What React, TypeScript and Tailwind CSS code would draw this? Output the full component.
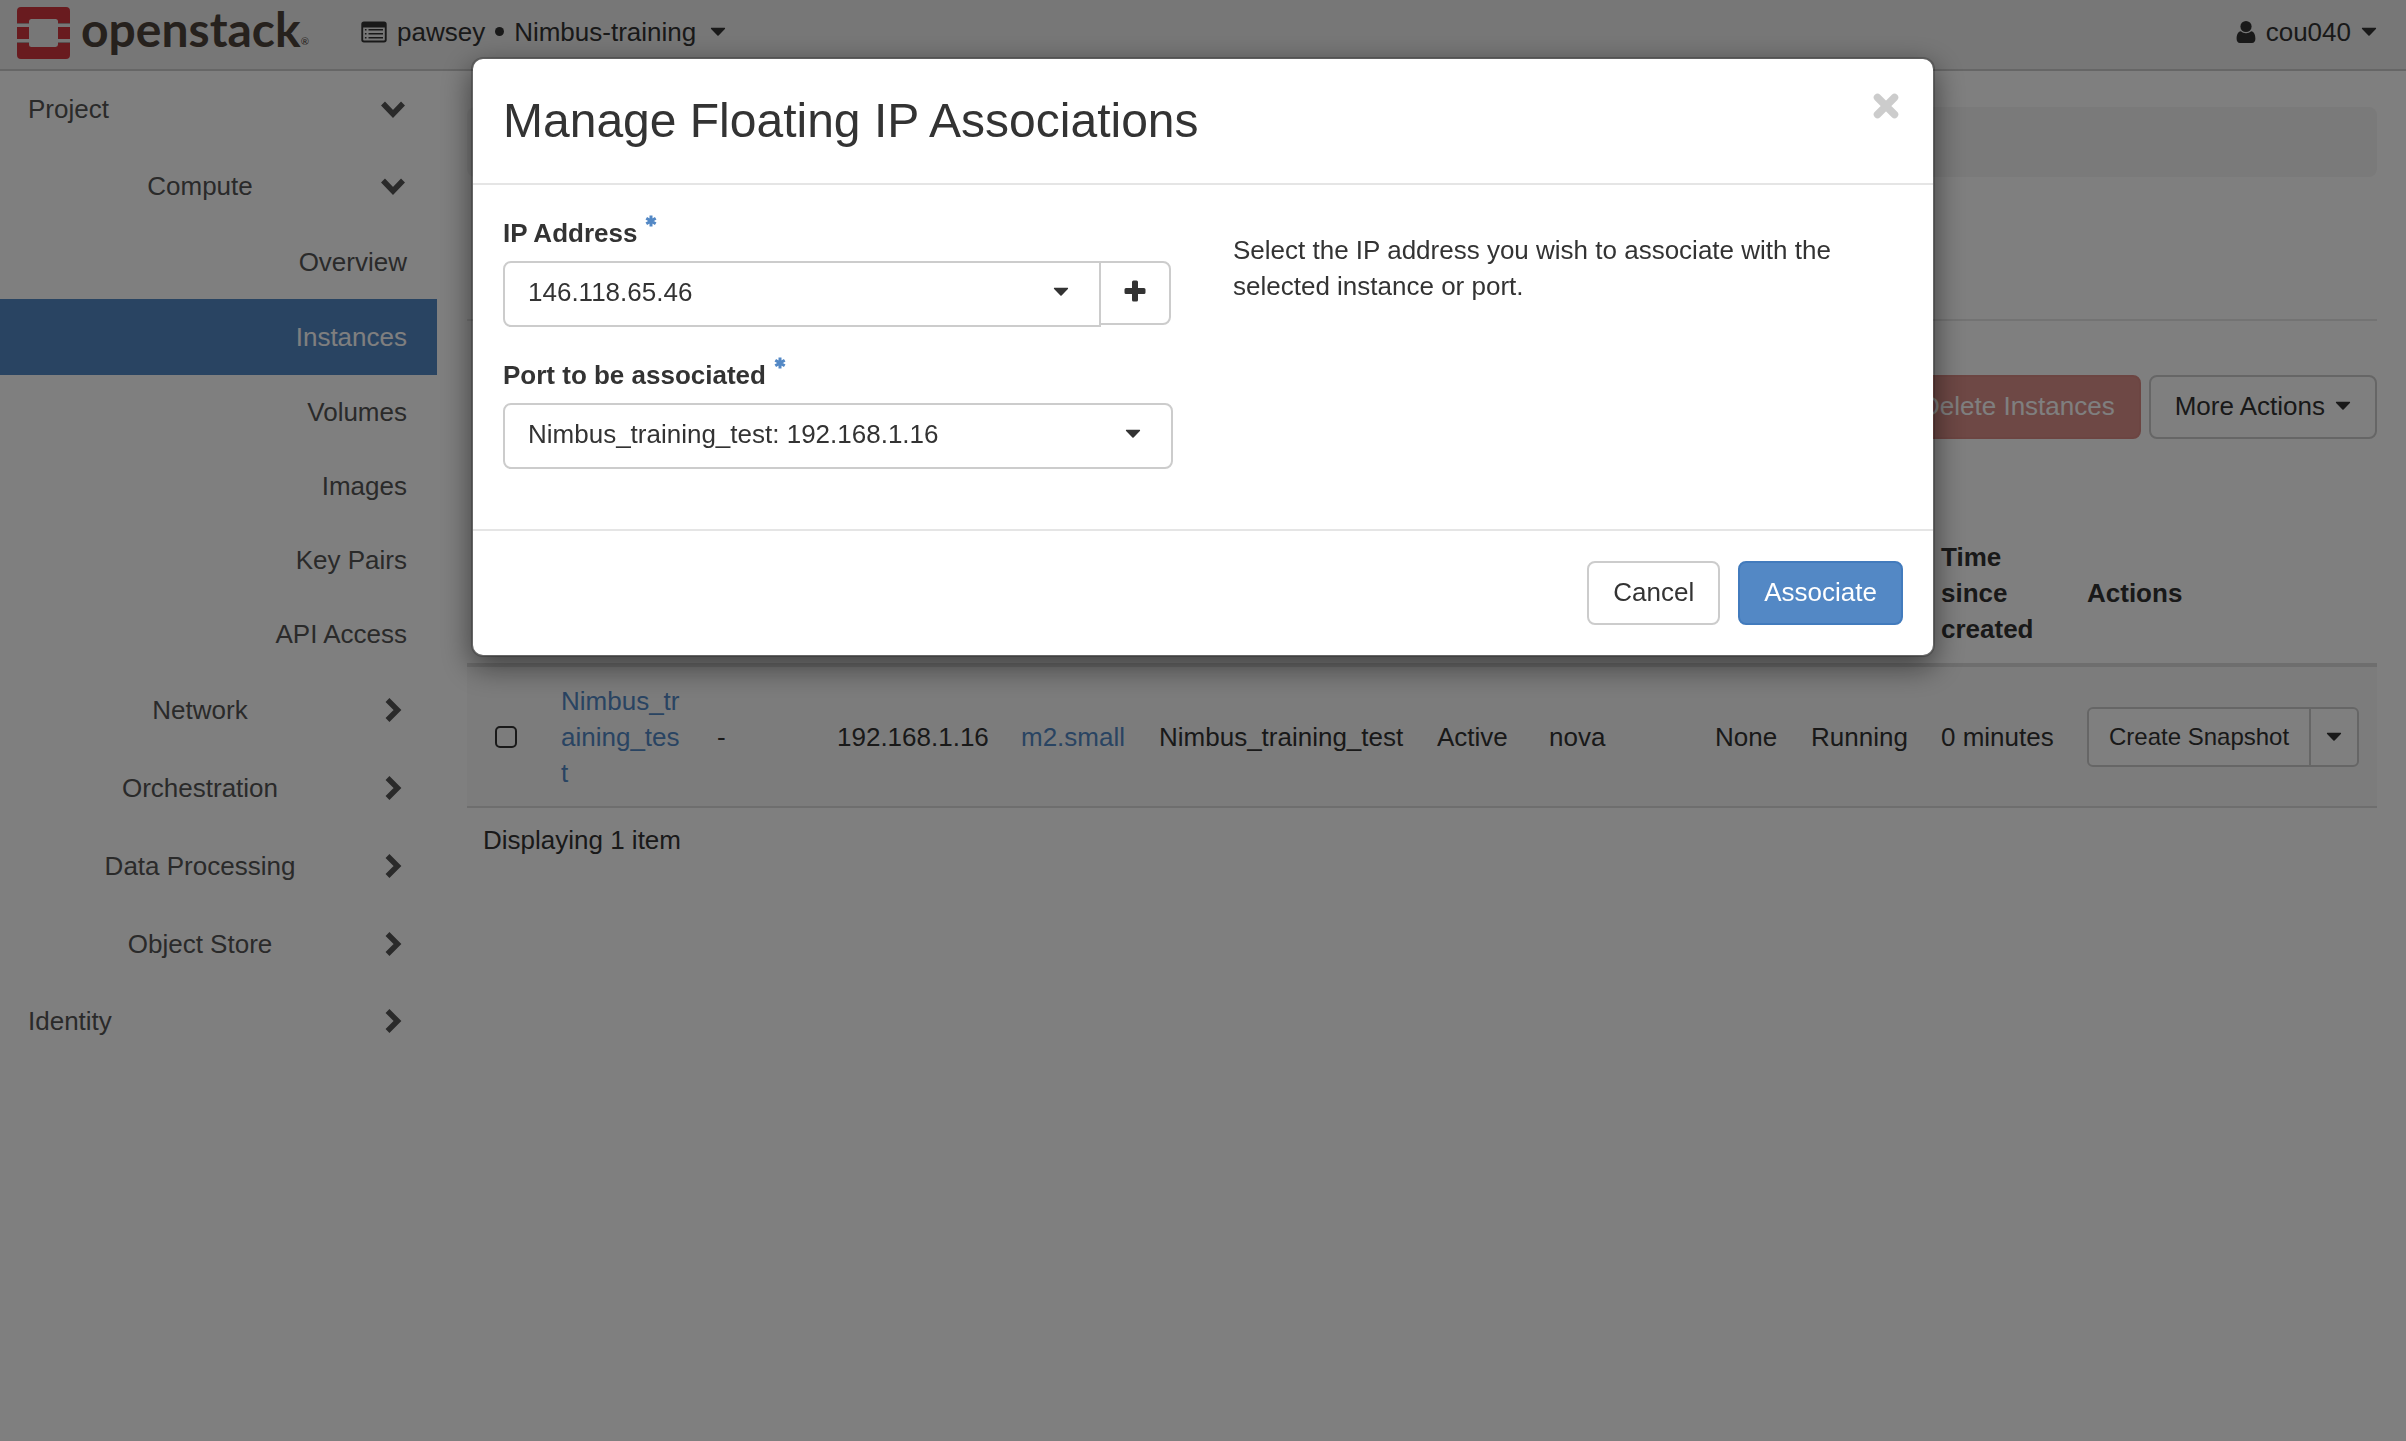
import React from 'react';

type IconProps = { className?: string };

function Caret({ className = '' }: IconProps) {
  return (
    <svg aria-hidden="true" viewBox="0 0 16 10" className={`h-[10px] w-4 shrink-0 fill-current ${className}`}>
      <path d="M1.6 .8h12.8c.7 0 1 .7.5 1.200L8.600 8.600a.9.9 0 0 1-1.200 0L1.100 2c-.5-.5-.2-1.200.5-1.200z" />
    </svg>
  );
}

function ChevronDown() {
  return (
    <svg aria-hidden="true" viewBox="0 0 26 26" className="size-[26px] shrink-0 fill-none stroke-current">
      <path d="M3 7.500l10 10.500 10-10.500" strokeWidth="5.500" />
    </svg>
  );
}

function ChevronRight() {
  return (
    <svg aria-hidden="true" viewBox="0 0 26 26" className="size-[26px] shrink-0 fill-none stroke-current">
      <path d="M7.500 3l10 10-10 10" strokeWidth="5.500" />
    </svg>
  );
}

function ListIcon() {
  return (
    <svg aria-hidden="true" viewBox="0 0 26 22" className="h-[22px] w-[26px] shrink-0 fill-current">
      <path
        fillRule="evenodd"
        d="M3 .5h20a2.700 2.700 0 0 1 2.700 2.700v15.600a2.700 2.700 0 0 1-2.700 2.700H3a2.700 2.700 0 0 1-2.700-2.700V3.200A2.700 2.700 0 0 1 3 .5zM2.200 6.500v12c0 .6.400 1 1 1h19.600c.6 0 1-.4 1-1v-12z"
      />
      <path d="M3.900 8h1.600v1.500H3.900zM3.900 12h1.600v1.500H3.900zM3.900 16h1.600v1.500H3.900zM7.500 8h14.500v1.600H7.500zM7.500 12h14.500v1.600H7.500zM7.500 16h14.500v1.600H7.500z" />
    </svg>
  );
}

function UserIcon() {
  return (
    <svg aria-hidden="true" viewBox="0 0 20 24" className="h-6 w-5 shrink-0 fill-current">
      <circle cx="10" cy="6.500" r="5.600" />
      <path d="M4.800 11.200A7 7 0 0 0 10 13.300a7 7 0 0 0 5.200-2.100c2.900.3 4.200 3.600 4.200 7.600 0 2.600-1.200 4.200-3.400 4.200H4C1.800 23 .6 21.400.6 18.800c0-4 1.300-7.300 4.200-7.600z" />
    </svg>
  );
}

function PlusIcon() {
  return (
    <svg aria-hidden="true" viewBox="0 0 22 22" className="size-[22px] fill-current">
      <path d="M9.500.5h3A1.500 1.500 0 0 1 14 2v6h6a1.500 1.500 0 0 1 1.500 1.500v3A1.500 1.500 0 0 1 20 14h-6v6a1.500 1.500 0 0 1-1.500 1.500h-3A1.500 1.500 0 0 1 8 20v-6H2a1.500 1.500 0 0 1-1.500-1.500v-3A1.500 1.500 0 0 1 2 8h6V2A1.500 1.500 0 0 1 9.500.5z" />
    </svg>
  );
}

function CloseIcon() {
  return (
    <svg aria-hidden="true" viewBox="0 0 26 26" className="size-[26px] fill-none stroke-current">
      <path d="M4.500 4.500l17 17M21.500 4.500l-17 17" strokeWidth="7.500" strokeLinecap="round" />
    </svg>
  );
}

function Asterisk() {
  return (
    <svg aria-hidden="true" viewBox="0 0 12 12" className="size-3 fill-none stroke-[#5388c5]">
      <path d="M6 .5v11M1.300 3.200l9.400 5.600M10.700 3.200L1.300 8.800" strokeWidth="3" />
    </svg>
  );
}

function Logo() {
  return (
    <a href="#home" aria-label="openstack" className="flex items-center gap-[11px] text-[#4d433b]">
      <svg aria-hidden="true" viewBox="0 0 53 52" className="h-[52px] w-[53px] shrink-0">
        <path
          fill="#d2363e"
          d="M4 0h45a4 4 0 0 1 4 4v12H41v-1.500a2.500 2.500 0 0 0-2.500-2.500h-24a2.500 2.500 0 0 0-2.500 2.500V16H0V4a4 4 0 0 1 4-4zM0 20h12v12H0zM41 20h12v12H41zM0 36h12v1.500a2.500 2.500 0 0 0 2.500 2.500h24a2.500 2.500 0 0 0 2.500-2.500V36h12v12a4 4 0 0 1-4 4H4a4 4 0 0 1-4-4z"
        />
        <path fill="#b9a3a3" d="M0 16h12v1H0zM41 16h12v1H41zM0 35h12v1H0zM41 35h12v1H41z" />
      </svg>
      <span className="flex items-end pb-2 font-[Lato,sans-serif] text-[48px] leading-[52px] font-bold">
        openstack
        <span className="text-[10px] leading-7 font-normal">®</span>
      </span>
    </a>
  );
}

type Level = 'panel' | 'group' | 'item';
type NavEntry = { label: string; level: Level; open?: boolean; active?: boolean };

const NAV: NavEntry[] = [
  { label: 'Project', level: 'panel', open: true },
  { label: 'Compute', level: 'group', open: true },
  { label: 'Overview', level: 'item' },
  { label: 'Instances', level: 'item', active: true },
  { label: 'Volumes', level: 'item' },
  { label: 'Images', level: 'item' },
  { label: 'Key Pairs', level: 'item' },
  { label: 'API Access', level: 'item' },
  { label: 'Network', level: 'group' },
  { label: 'Orchestration', level: 'group' },
  { label: 'Data Processing', level: 'group' },
  { label: 'Object Store', level: 'group' },
  { label: 'Identity', level: 'panel' },
];

function Sidebar() {
  return (
    <nav aria-label="Dashboard" className="w-[437px] shrink-0 text-[#555]">
      <ul>
        {NAV.map((n) => (
          <li key={n.label}>
            {n.level === 'item' ? (
              <a
                href="#nav"
                aria-current={n.active ? 'page' : undefined}
                className={`flex items-center justify-end pr-[30px] ${
                  n.active ? 'h-[76px] bg-[#5388c5] text-white' : 'h-[74px]'
                }`}
              >
                {n.label}
              </a>
            ) : (
              <button
                type="button"
                aria-expanded={!!n.open}
                className={`flex w-full items-center gap-1 pr-[31px] ${
                  n.level === 'panel' ? 'h-[76px] pl-7' : 'h-[78px] pl-6'
                }`}
              >
                <span className={`flex-1 ${n.level === 'panel' ? 'text-left' : 'text-center'}`}>{n.label}</span>
                {n.open ? <ChevronDown /> : <ChevronRight />}
              </button>
            )}
          </li>
        ))}
      </ul>
    </nav>
  );
}

const HIDDEN_HEADERS = [
  'Instance Name',
  'Image Name',
  'IP Address',
  'Size',
  'Key Pair',
  'Status',
  'Availability Zone',
  'Task',
  'Power State',
];

function InstancesTable() {
  return (
    <table className="mt-[84px] w-full table-fixed border-collapse text-left">
      <colgroup>
        <col className="w-[78px]" />
        <col className="w-[156px]" />
        <col className="w-[120px]" />
        <col className="w-[184px]" />
        <col className="w-[138px]" />
        <col className="w-[278px]" />
        <col className="w-[112px]" />
        <col className="w-[166px]" />
        <col className="w-[96px]" />
        <col className="w-[130px]" />
        <col className="w-[146px]" />
        <col />
      </colgroup>
      <thead>
        <tr className="border-b-4 border-[#ddd]">
          <th scope="col" aria-label="Select" />
          {HIDDEN_HEADERS.map((h) => (
            <th key={h} scope="col" aria-label={h} />
          ))}
          <th scope="col" className="p-4 font-bold">Time since created</th>
          <th scope="col" className="p-4 font-bold">Actions</th>
        </tr>
      </thead>
      <tbody>
        <tr className="h-[142px] border-b-2 border-[#ddd] bg-[#f9f9f9]">
          <td className="pl-7">
            <input
              type="checkbox"
              aria-label="Select Nimbus_training_test"
              className="block size-[22px] appearance-none rounded-[5px] border-2 border-[#333]"
            />
          </td>
          <td className="px-4 break-all">
            <a href="#instance" className="text-[#5388c5]">Nimbus_training_test</a>
          </td>
          <td className="px-4">-</td>
          <td className="px-4">192.168.1.16</td>
          <td className="px-4 whitespace-nowrap">
            <a href="#flavor" className="text-[#5388c5]">m2.small</a>
          </td>
          <td className="px-4">Nimbus_training_test</td>
          <td className="px-4">Active</td>
          <td className="px-4">nova</td>
          <td className="px-4">None</td>
          <td className="px-4">Running</td>
          <td className="pl-4 whitespace-nowrap">0 minutes</td>
          <td className="pl-4">
            <div className="flex h-[60px] text-[24px]">
              <button type="button" className="rounded-l-[6px] border-2 border-[#ccc] bg-white px-5 whitespace-nowrap">
                Create Snapshot
              </button>
              <button
                type="button"
                aria-label="More instance actions"
                className="-ml-[2px] flex w-[50px] items-center justify-center rounded-r-[6px] border-2 border-[#ccc] bg-white"
              >
                <Caret />
              </button>
            </div>
          </td>
        </tr>
      </tbody>
      <tfoot>
        <tr>
          <td colSpan={12} className="px-4 py-[14px]">Displaying 1 item</td>
        </tr>
      </tfoot>
    </table>
  );
}

function SelectBox({ id, value, className = '' }: { id: string; value: string; className?: string }) {
  return (
    <div className="relative min-w-0 flex-1">
      <select
        id={id}
        defaultValue={value}
        className={`block h-[66px] w-full appearance-none border-2 border-[#ccc] bg-white pr-16 pb-1 pl-[23px] ${className}`}
      >
        <option>{value}</option>
      </select>
      <Caret className="pointer-events-none absolute top-[26px] right-8" />
    </div>
  );
}

function FieldLabel({ htmlFor, children }: { htmlFor: string; children: React.ReactNode }) {
  return (
    <label htmlFor={htmlFor} className="mb-[10px] flex items-start gap-2 font-bold">
      {children}
      <Asterisk />
    </label>
  );
}

function FloatingIpDialog() {
  return (
    <div className="fixed inset-0 flex items-start justify-center bg-black/50 pt-[57px]">
      <div
        role="dialog"
        aria-modal="true"
        aria-labelledby="dialog-title"
        className="w-full max-w-[1464px] rounded-[12px] border-2 border-black/20 bg-white bg-clip-padding shadow-[0_10px_30px_rgba(0,0,0,0.5)]"
      >
        <header className="flex items-start justify-between border-b-2 border-[#e5e5e5] px-[30px] pt-[30px] pb-[34px]">
          <h2 id="dialog-title" className="pt-1 text-[48px] leading-[56px]">Manage Floating IP Associations</h2>
          <button type="button" aria-label="Close" className="p-1 text-[#ccc]">
            <CloseIcon />
          </button>
        </header>
        <form>
          <div className="grid grid-cols-2 gap-[60px] px-[30px] pt-[30px] pb-[60px]">
            <div>
              <FieldLabel htmlFor="ip">IP Address</FieldLabel>
              <div className="mb-[30px] flex items-start pr-[2px]">
                <SelectBox id="ip" value="146.118.65.46" className="rounded-l-[8px]" />
                <button
                  type="button"
                  aria-label="Allocate IP"
                  className="-ml-[2px] flex h-16 w-[72px] items-center justify-center rounded-r-[8px] border-2 border-[#ccc] bg-white pb-1"
                >
                  <PlusIcon />
                </button>
              </div>
              <FieldLabel htmlFor="port">Port to be associated</FieldLabel>
              <SelectBox id="port" value="Nimbus_training_test: 192.168.1.16" className="rounded-[8px]" />
            </div>
            <p className="pt-[17px]">Select the IP address you wish to associate with the selected instance or port.</p>
          </div>
          <footer className="flex justify-end gap-[18px] border-t-2 border-[#e5e5e5] p-[30px]">
            <button type="button" className="h-16 rounded-[8px] border-2 border-[#ccc] px-6 pb-[2px]">Cancel</button>
            <button type="button" className="h-16 rounded-[8px] border-2 border-[#427bbd] bg-[#5388c5] px-6 pb-[2px] text-white">
              Associate
            </button>
          </footer>
        </form>
      </div>
    </div>
  );
}

export default function App() {
  return (
    <div className="min-h-screen bg-white font-['Liberation_Sans',Arial,sans-serif] text-[26px] leading-9 text-[#333]">
      <header className="flex h-[71px] items-center justify-between border-b-2 border-[#ccc] bg-[#eee] pr-[29px] pb-1 pl-[17px]">
        <div className="flex items-center gap-[52px]">
          <Logo />
          <button type="button" className="flex items-center gap-[10px] pb-[2px]">
            <ListIcon />
            <span>pawsey</span>
            <span className="size-[9px] rounded-full bg-[#333]" />
            <span>Nimbus-training</span>
            <Caret className="ml-1" />
          </button>
        </div>
        <button type="button" className="flex items-center gap-[10px] pb-[2px]">
          <UserIcon />
          <span>cou040</span>
          <Caret />
        </button>
      </header>
      <div className="flex">
        <Sidebar />
        <main className="min-w-0 flex-1 pt-9 pr-[29px] pl-[30px]">
          <div className="h-[70px] rounded-[8px] bg-[#f5f5f5]" />
          <div role="heading" aria-level={1} aria-label="Instances" className="h-36 border-b-2 border-[#e7e7e7]" />
          <div className="mt-[54px] flex justify-end gap-2">
            <button type="button" className="h-16 rounded-[8px] border-2 border-[#d98a84] bg-[#dc908a] px-6 pb-[2px] text-white">
              Delete Instances
            </button>
            <button type="button" className="flex h-16 items-center gap-[10px] rounded-[8px] border-2 border-[#ccc] px-6 pb-[2px]">
              More Actions
              <Caret />
            </button>
          </div>
          <InstancesTable />
        </main>
      </div>
      <FloatingIpDialog />
    </div>
  );
}
